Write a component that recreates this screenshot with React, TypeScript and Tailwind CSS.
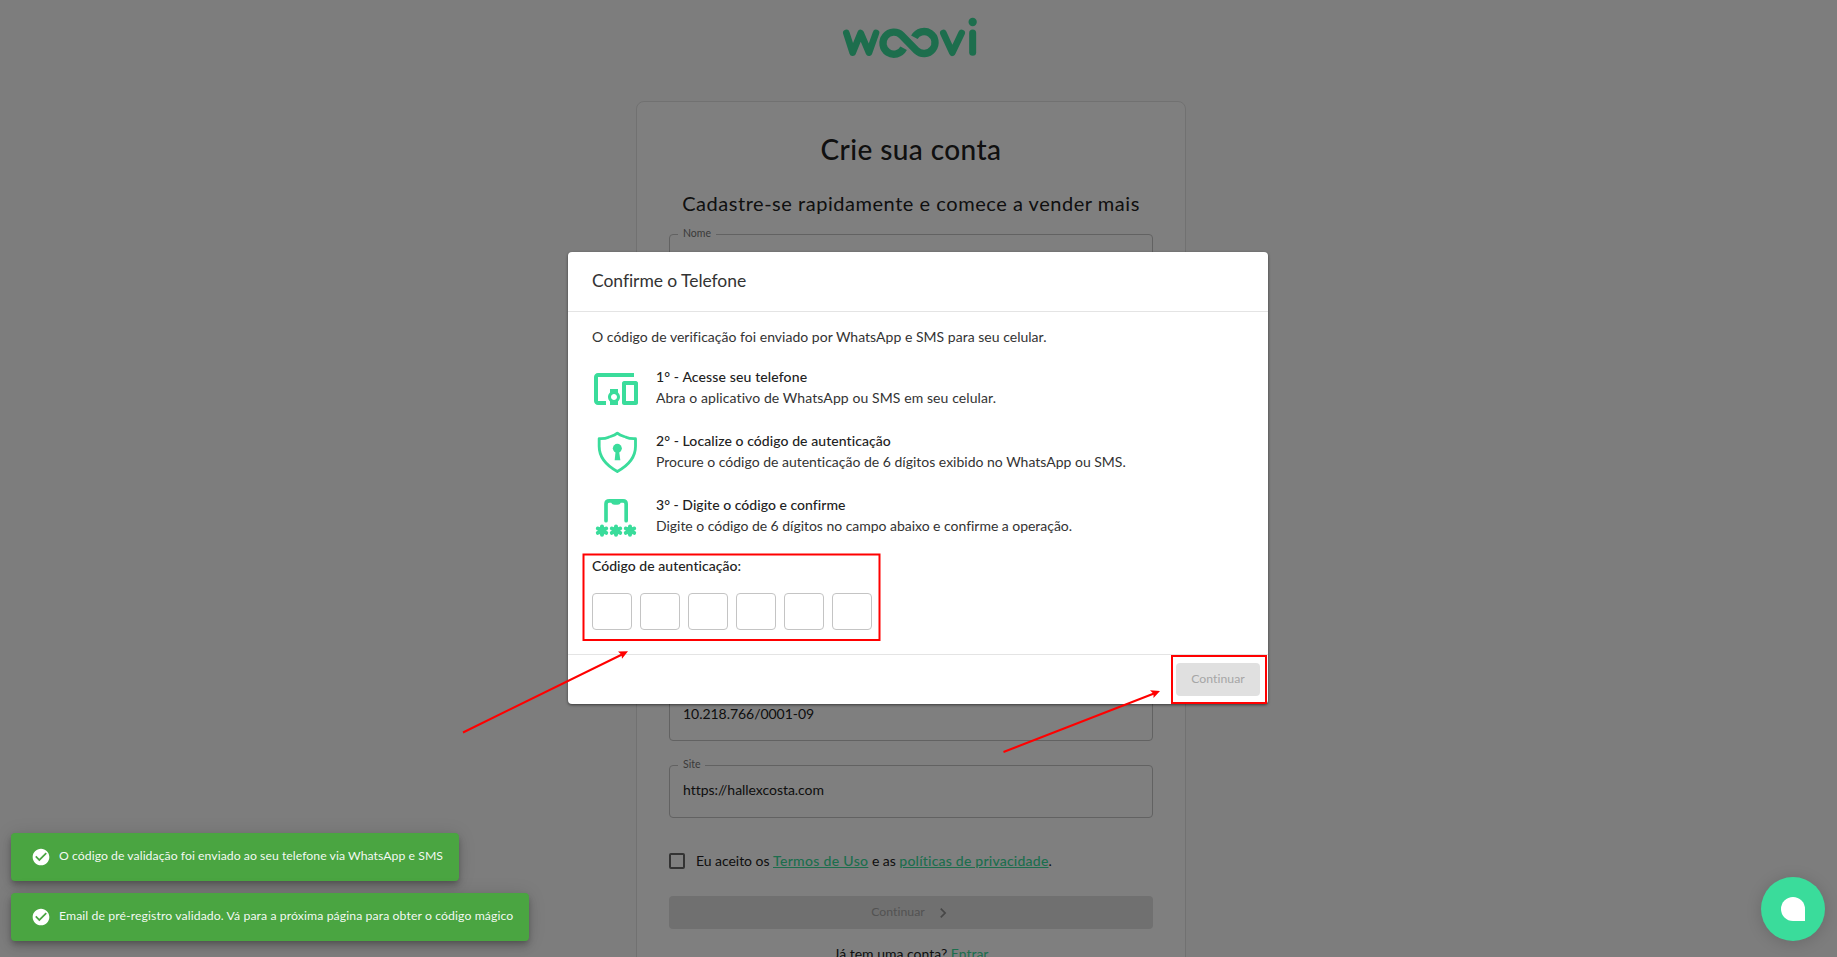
import React from 'react'

function WooviLogo() {
  return (
    <svg viewBox="60 40 430 150" className="ml-[2px] block h-[50px] w-[143.333px]" fill="none" stroke="#3adc9b" strokeWidth="20" strokeLinecap="round" strokeLinejoin="round">
      <path d="M79 100 L98 159 L122 100 L147 159 L168 100" />
      <path d="M251 146 A33 33 0 1 1 245 107 L289 152 A33 33 0 1 0 283 113" strokeWidth="22" strokeLinecap="butt" />
      <path d="M370 100 L397 159 L425 100" />
      <path d="M458 100 V158" strokeWidth="21" />
      <circle cx="458" cy="67" r="12.5" fill="#3adc9b" stroke="none" />
    </svg>
  )
}

function DevicesIcon() {
  return (
    <svg viewBox="0 0 24 24" className="h-12 w-12 shrink-0" fill="#3adc9b">
      <path d="M3 6h18V4H3c-1.1 0-2 .9-2 2v12c0 1.1.9 2 2 2h4v-2H3V6zm10 6H9v1.78c-.61.55-1 1.33-1 2.22s.39 1.67 1 2.22V20h4v-1.78c.61-.55 1-1.34 1-2.22s-.39-1.67-1-2.22V12zm-2 5.5c-.83 0-1.5-.67-1.5-1.5s.67-1.5 1.5-1.5 1.5.67 1.5 1.5-.67 1.5-1.5 1.5zM22 8h-6c-.5 0-1 .5-1 1v10c0 .5.5 1 1 1h6c.5 0 1-.5 1-1V9c0-.5-.5-1-1-1zm-1 10h-4v-8h4v8z" />
    </svg>
  )
}

function ShieldIcon() {
  return (
    <svg viewBox="36 207 144 144" className="h-12 w-12 shrink-0" fill="#3adc9b">
      <path d="M112 219.500C103 227 94 228.500 86 231.500C78 235.500 68 236.500 57.500 236V259C57.500 292 76 315 112 334.500C148 315 166.500 292 166.500 259V236C156 236.500 146 235.500 138 231.500C130 228.500 121 227 112 219.500Z" fill="none" stroke="#3adc9b" strokeWidth="8.500" strokeLinejoin="round" />
      <circle cx="112" cy="265" r="13.500" />
      <path d="M107 272L104 300.500H121L117 272Z" />
    </svg>
  )
}

function PasscodeIcon() {
  return (
    <svg viewBox="36 399 144 144" className="h-12 w-12 shrink-0" fill="none" stroke="#3adc9b" strokeLinecap="round">
      <path d="M78 482V432Q78 422.500 88 422.500H129Q138.500 422.500 138.500 432V482" strokeWidth="11" />
      <path d="M93 424H123Q122 434.500 112 434.500H104Q94 434.500 93 424Z" fill="#3adc9b" stroke="none" />
      {[66, 108, 150].map((x) => (
        <g key={x} transform={`translate(${x} 512)`} strokeWidth="12">
          <path d="M0 -12.500V12.500M-12.500 -6.500L12.500 6.500M-12.500 6.500L12.500 -6.500" />
          <circle r="6" fill="#3adc9b" />
        </g>
      ))}
    </svg>
  )
}

function Field({ label, value }: { label?: string; value?: string }) {
  return (
    <div className="relative flex h-[52.5px] shrink-0 items-center rounded-[4px] border border-[#c4c4c4] px-[13px] last:h-[53.5px]">
      {label && (
        <span className="absolute -top-[9px] left-[8px] bg-white px-[5px] text-[10.5px] leading-[14px] text-[#757575]">{label}</span>
      )}
      {value && <span className="-mt-[2px] text-[14px] leading-5 tracking-[-0.04px] text-[#212121]">{value}</span>}
    </div>
  )
}

function SignupPage() {
  return (
    <div className="flex h-full flex-col items-center overflow-hidden bg-[#fafafa] pr-[15px]">
      <div className="flex h-[101px] shrink-0 flex-col pt-[13.333px]">
        <WooviLogo />
      </div>
      <div className="flex h-[900px] w-[550px] shrink-0 flex-col rounded-[8px] border border-[#e2e2e2] bg-white px-8 pt-[28px]">
        <h1 className="h-[39px] text-center text-[28px] font-medium leading-[39px] tracking-[0.41px] text-[#212121]">Crie sua conta</h1>
        <h2 className="mt-[15px] h-[39px] whitespace-nowrap text-center text-[20px] leading-[39px] tracking-[0.54px] text-[#212121]">
          Cadastre-se rapidamente e comece a vender mais
        </h2>
        <div className="mt-[11px] flex flex-col gap-[23.3px]">
          <Field label="Nome" />
          <Field />
          <Field />
          <Field />
          <Field />
          <Field />
          <Field value="10.218.766/0001-09" />
          <Field label="Site" value="https://hallexcosta.com" />
        </div>
        <div className="mt-[31px] flex h-6 items-center">
          <span className="h-4 w-4 rounded-[2px] border-2 border-[#666]" />
          <p className="ml-[11px] whitespace-nowrap text-[14px] leading-6 tracking-[-0.04px] text-[#212121]">
            Eu aceito os <a className="font-medium tracking-[0.32px] text-[#3adc9b] underline">Termos de Uso</a> e as{' '}
            <a className="font-medium tracking-[0.22px] text-[#3adc9b] underline">políticas de privacidade</a>.
          </p>
        </div>
        <button className="mt-[23px] flex h-[33px] shrink-0 items-center justify-center rounded-[4px] bg-[#e0e0e0] pl-[2px] text-[12.25px] leading-[31px] tracking-[0.05px] text-[#a6a6a6]">
          <span className="-mt-0.5">Continuar</span>
          <svg viewBox="0 0 24 24" className="ml-[8px] h-5 w-5" fill="#8f8f8f">
            <path d="M10 6 8.590 7.410 13.170 12l-4.580 4.590L10 18l6-6z" />
          </svg>
        </button>
        <p className="mt-[15px] text-center text-[14px] leading-5 text-[#212121]">
          Já tem uma conta? <a className="text-[#3adc9b]">Entrar</a>
        </p>
      </div>
    </div>
  )
}

function Step({ icon, title, text, track, titleTrack }: { icon: React.ReactNode; title: string; text: string; track: string; titleTrack: string }) {
  return (
    <li className="flex h-12 gap-4">
      {icon}
      <div className="whitespace-nowrap pt-px text-[14px] leading-[21px] text-[#333]">
        <p className={`font-medium text-[#222] ${titleTrack}`}>{title}</p>
        <p className={track}>{text}</p>
      </div>
    </li>
  )
}

function PhoneDialog() {
  return (
    <div role="dialog" className="absolute left-[568px] top-[252px] flex h-[452px] w-[700px] flex-col rounded-[4px] bg-white text-[#333] shadow-[0_1px_3px_rgba(0,0,0,0.55)]">
      <header className="h-[60px] border-b border-[#e4e4e4] px-6">
        <h2 className="text-[17.5px] leading-[57px] tracking-[-0.06px]">Confirme o Telefone</h2>
      </header>
      <div className="flex h-[342px] flex-col px-6 pt-[14px]">
        <p className="text-[14px] leading-[21px] tracking-[0.02px]">O código de verificação foi enviado por WhatsApp e SMS para seu celular.</p>
        <ul className="mt-[18px] flex flex-col gap-4">
          <Step icon={<DevicesIcon />} title="1° - Acesse seu telefone" text="Abra o aplicativo de WhatsApp ou SMS em seu celular." titleTrack="tracking-[0.13px]" track="tracking-[0.09px]" />
          <Step icon={<ShieldIcon />} title="2° - Localize o código de autenticação" text="Procure o código de autenticação de 6 dígitos exibido no WhatsApp ou SMS." titleTrack="tracking-[0.07px]" track="tracking-[-0.003px]" />
          <Step icon={<PasscodeIcon />} title="3° - Digite o código e confirme" text="Digite o código de 6 dígitos no campo abaixo e confirme a operação." titleTrack="tracking-[0.03px]" track="tracking-[-0.03px]" />
        </ul>
        <p className="mt-[14px] text-[14px] font-medium leading-[21px] tracking-[0.03px] text-[#222]">Código de autenticação:</p>
        <div className="mt-[17px] flex gap-2">
          {[0, 1, 2, 3, 4, 5].map((i) => (
            <span key={i} className="h-[37px] w-10 rounded-[4px] border border-[#c4c4c4]" />
          ))}
        </div>
      </div>
      <footer className="flex h-[50px] justify-end border-t border-[#e4e4e4] pr-2 pt-2">
        <button className="h-[33px] w-[84px] rounded-[4px] bg-[#e0e0e0] pb-[2px] text-[12.25px] leading-[31px] tracking-[0.05px] text-[#a6a6a6]">Continuar</button>
      </footer>
    </div>
  )
}

function Toast({ text, track }: { text: string; track: string }) {
  return (
    <div className="flex h-12 items-center rounded-[4px] bg-[#4aa541] pl-5 pr-4 text-white shadow-[0_3px_5px_-1px_rgba(0,0,0,0.2),0_6px_10px_rgba(0,0,0,0.14),0_1px_18px_rgba(0,0,0,0.12)]">
      <svg viewBox="0 0 24 24" className="h-5 w-5 shrink-0" fill="#fff">
        <path d="M12 2C6.500 2 2 6.500 2 12S6.500 22 12 22 22 17.500 22 12 17.500 2 12 2M10 17L5 12L6.410 10.590L10 14.170L17.590 6.580L19 8L10 17Z" />
      </svg>
      <span className={`-mt-[3px] ml-2 whitespace-nowrap text-[12.25px] leading-[18px] text-white/95 ${track}`}>{text}</span>
    </div>
  )
}

function Annotations() {
  return (
    <svg viewBox="0 0 1837 957" className="pointer-events-none absolute inset-0 h-[957px] w-[1837px]" fill="none" stroke="#ff0000" strokeWidth="2">
      <rect x="583.500" y="554.500" width="296" height="85.500" />
      <rect x="1172" y="656" width="94" height="47" />
      <path d="M463 732.500L622 654.500M1003.500 752L1154 693.500" />
      <path d="M628 651.300L622 658.800L621.500 654.800L618 651.500Z M1160 691L1153.500 698L1153.500 693.700L1150 690.300Z" fill="#ff0000" stroke="none" />
    </svg>
  )
}

export default function App() {
  return (
    <div className="relative h-[957px] w-full overflow-hidden font-['Lato',sans-serif] [font-variant-ligatures:none]">
      <SignupPage />
      <div className="absolute inset-0 bg-black/50" />
      <PhoneDialog />
      <div className="absolute bottom-4 left-[11px] flex flex-col items-start gap-3">
        <Toast text="O código de validação foi enviado ao seu telefone via WhatsApp e SMS" track="tracking-[0.035px]" />
        <Toast text="Email de pré-registro validado. Vá para a próxima página para obter o código mágico" track="tracking-[0.089px]" />
      </div>
      <button className="absolute bottom-4 right-3 flex h-16 w-16 items-center justify-center rounded-full bg-[#3adc9b] shadow-[0_2px_16px_rgba(0,0,0,0.16)]">
        <span className="h-6 w-6 rounded-full rounded-br-none bg-white" />
      </button>
      <Annotations />
    </div>
  )
}
